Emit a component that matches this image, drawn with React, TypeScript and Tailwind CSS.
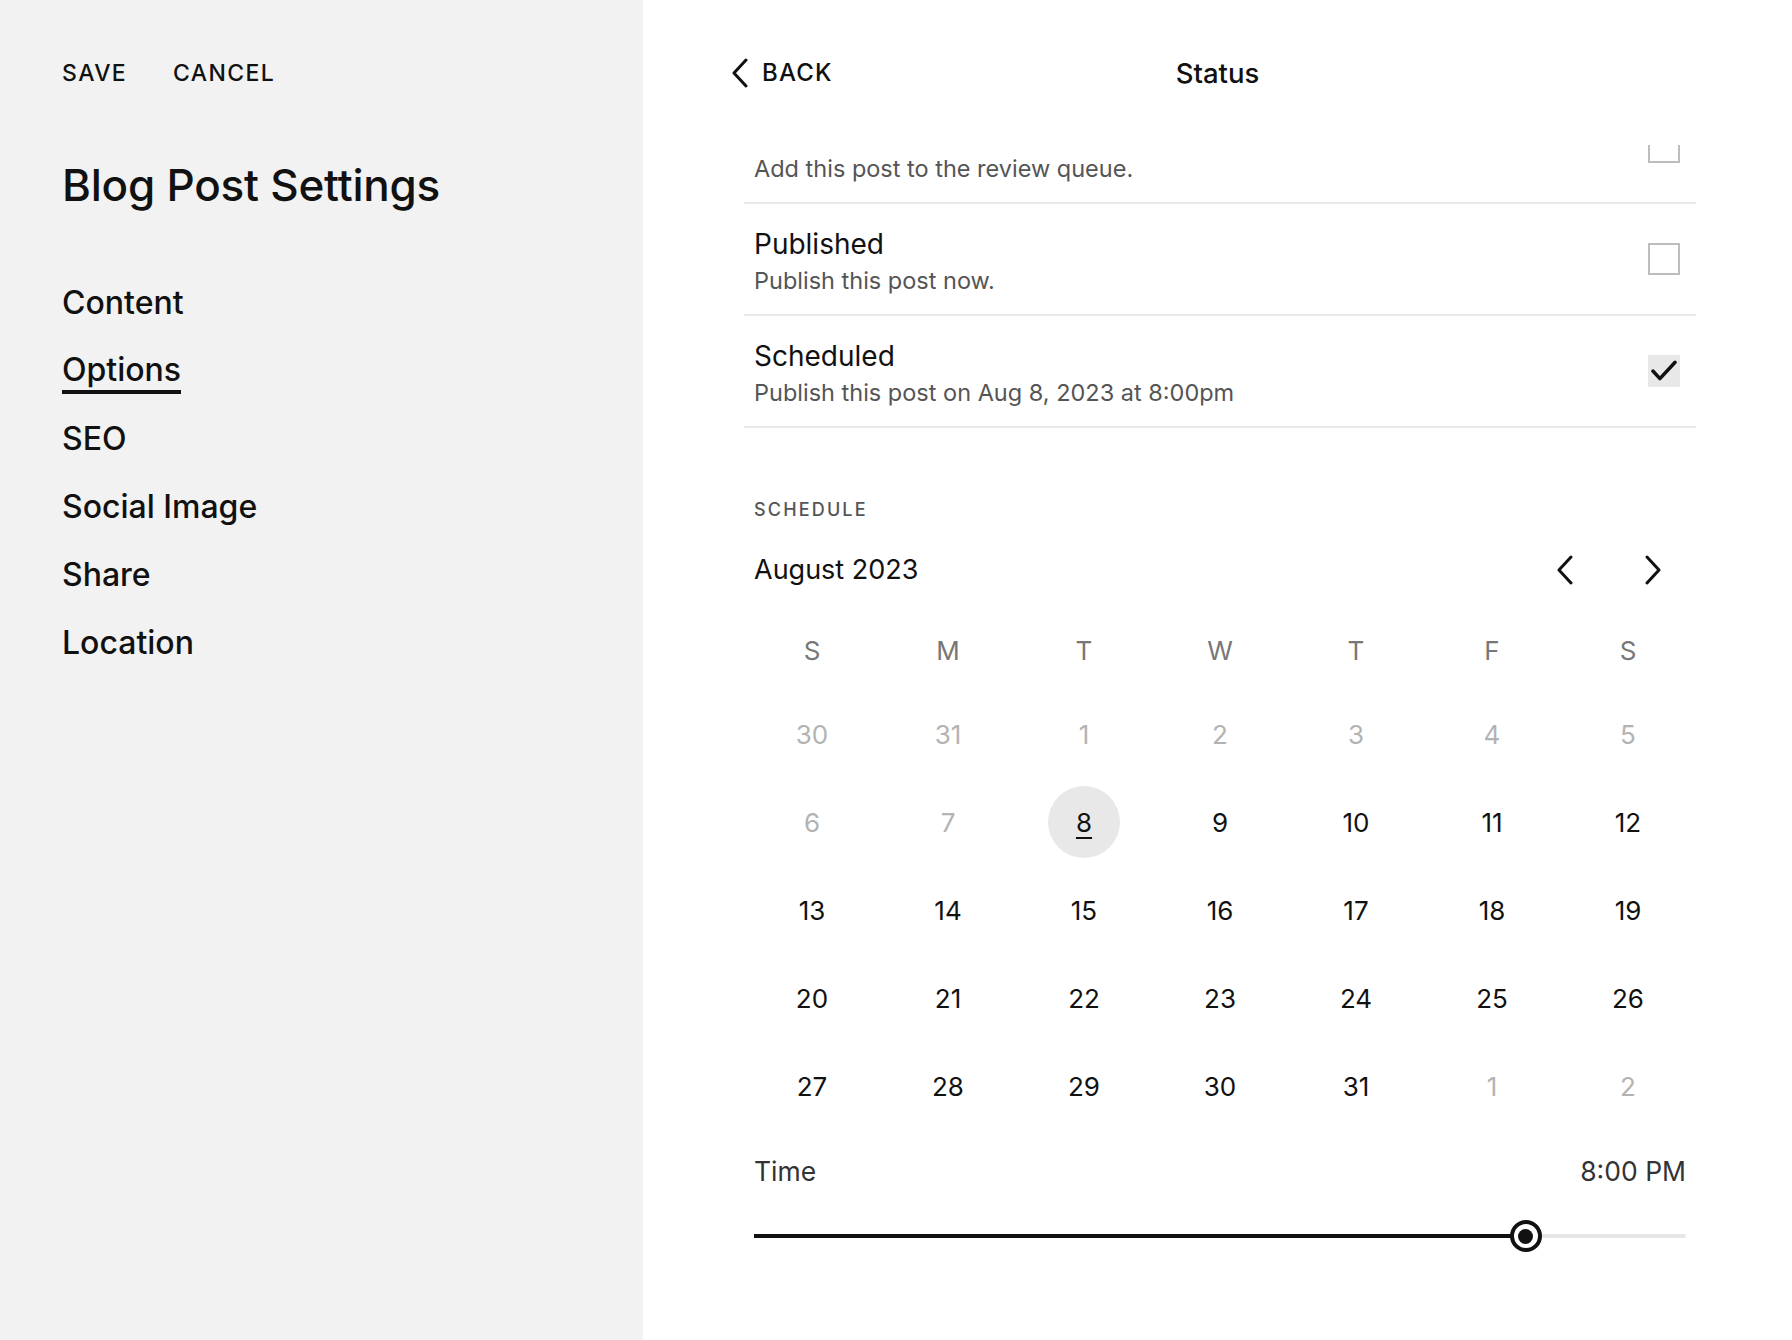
import React, { useState } from 'react';

type StatusRow = {
  title: string;
  subtitle: string;
  checked: boolean;
};

const rows: StatusRow[] = [
  { title: 'In Review', subtitle: 'Add this post to the review queue.', checked: false },
  { title: 'Published', subtitle: 'Publish this post now.', checked: false },
  { title: 'Scheduled', subtitle: 'Publish this post on Aug 8, 2023 at 8:00pm', checked: true },
];

const navItems = ['Content', 'Options', 'SEO', 'Social Image', 'Share', 'Location'];
const weekdays = ['S', 'M', 'T', 'W', 'T', 'F', 'S'];

// August 2023 as shown: leading days from July, trailing from September
const days: { day: number; muted: boolean }[] = [
  ...[30, 31].map((d) => ({ day: d, muted: true })),
  ...[1, 2, 3, 4, 5, 6, 7].map((d) => ({ day: d, muted: true })),
  ...Array.from({ length: 24 }, (_, i) => ({ day: i + 8, muted: false })),
  ...[1, 2].map((d) => ({ day: d, muted: true })),
];

function Chevron({ dir, className }: { dir: 'left' | 'right'; className?: string }) {
  return (
    <svg viewBox="0 0 18 30" className={className} fill="none" stroke="currentColor" strokeWidth="3" strokeLinecap="round" strokeLinejoin="round">
      {dir === 'left' ? <path d="M15 2 L3 15 L15 28" /> : <path d="M3 2 L15 15 L3 28" />}
    </svg>
  );
}

function Checkbox({ checked }: { checked: boolean }) {
  if (checked) {
    return (
      <div className="flex h-[32px] w-[32px] items-center justify-center bg-[#e8e8e8]">
        <svg viewBox="0 0 24 24" className="h-[28px] w-[28px]" fill="none" stroke="#111" strokeWidth="3" strokeLinecap="round" strokeLinejoin="round">
          <path d="M2.5 12 L8.5 18.5 L21.5 4.5" />
        </svg>
      </div>
    );
  }
  return <div className="h-[32px] w-[32px] border-2 border-[#bdbdbd]" />;
}

export default function App() {
  const [selected, setSelected] = useState(8);
  const timePct = 82.8;

  return (
    <div className="flex h-[1340px] w-full overflow-hidden bg-white font-['Inter','Noto_Sans',sans-serif] text-[#111]">
      <aside className="w-[643px] shrink-0 bg-[#f2f2f2] pl-[62px] pt-[58px]">
        <div className="flex gap-[46px] text-[23px] font-medium leading-[30px] tracking-[0.06em]">
          <button>SAVE</button>
          <button>CANCEL</button>
        </div>
        <h1 className="mt-[69px] text-[44px] font-medium leading-[56px] tracking-[-0.005em]">Blog Post Settings</h1>
        <nav className="mt-[69px] flex flex-col gap-[26px]">
          {navItems.map((item) => (
            <a key={item} className="flex h-[42px] items-start text-[32px] font-medium leading-[42px]">
              <span className={item === 'Options' ? 'border-b-[4px] border-[#111] leading-[40px]' : ''}>{item}</span>
            </a>
          ))}
        </nav>
      </aside>

      <main className="flex min-w-0 flex-1 flex-col">
        <header className="grid h-[145px] shrink-0 grid-cols-[1fr_auto_1fr] items-start pt-[54px]">
          <button className="flex items-center gap-[12px] pl-[87px] text-[24px] font-medium leading-[38px] tracking-[0.05em]">
            <Chevron dir="left" className="h-[30px] w-[20px]" />
            BACK
          </button>
          <h2 className="text-[27.5px] font-medium leading-[38px]">Status</h2>
          <div />
        </header>

        <div className="ml-[101px] mr-[96px] flex-1 overflow-hidden">
          <div className="-mt-[53px]">
            {rows.map((row) => (
              <div key={row.title} className="flex h-[112px] items-center justify-between border-b-2 border-[#e8e8e8] pl-[10px] pr-[16px]">
                <div className="pt-[6px]">
                  <div className="text-[28px] leading-[34px]">{row.title}</div>
                  <div className="mt-[4px] text-[23.5px] leading-[32px] text-[#555]">{row.subtitle}</div>
                </div>
                <Checkbox checked={row.checked} />
              </div>
            ))}
          </div>

          <section className="px-[10px]">
            <div className="mt-[70px] text-[18px] font-medium leading-[24px] tracking-[0.12em] text-[#555]">SCHEDULE</div>
            <div className="mt-[30px] flex h-[36px] items-center justify-between">
              <div className="text-[27px] leading-[36px]">August 2023</div>
              <div className="flex items-center gap-[66px] pr-[22px]">
                <Chevron dir="left" className="h-[30px] w-[22px]" />
                <Chevron dir="right" className="h-[30px] w-[22px]" />
              </div>
            </div>
          </section>

          <div className="mt-[22px] grid grid-cols-7">
            {weekdays.map((w, i) => (
              <div key={i} className="flex h-[80px] items-center justify-center text-[26px] text-[#777]">
                {w}
              </div>
            ))}
            {days.map((d, i) => {
              const isSel = !d.muted && d.day === selected;
              return (
                <div key={i} className="flex h-[88px] items-center justify-center">
                  <button
                    onClick={() => !d.muted && setSelected(d.day)}
                    className={
                      'flex h-[72px] w-[72px] items-center justify-center rounded-full text-[26px] ' +
                      (d.muted ? 'text-[#b3b3b3] ' : 'text-[#111] ') +
                      (isSel ? 'bg-[#e8e8e8] underline underline-offset-[5px] decoration-2' : '')
                    }
                  >
                    {d.day}
                  </button>
                </div>
              );
            })}
          </div>

          <section className="px-[10px]">
            <div className="mt-[23px] flex h-[36px] items-center justify-between text-[26.5px] leading-[36px]">
              <span className="text-[#333]">Time</span>
              <span className="text-[#333]">8:00 PM</span>
            </div>
            <div className="relative mt-[31px] h-[32px]">
              <div className="absolute left-0 right-0 top-[14px] h-[4px] rounded-full bg-[#e6e6e6]" />
              <div className="absolute left-0 top-[14px] h-[4px] bg-[#111]" style={{ width: `${timePct}%` }} />
              <div
                className="absolute top-0 flex h-[32px] w-[32px] -translate-x-1/2 items-center justify-center rounded-full border-[4px] border-[#111] bg-white"
                style={{ left: `${timePct}%` }}
              >
                <div className="h-[15px] w-[15px] rounded-full bg-[#111]" />
              </div>
            </div>
          </section>
        </div>
      </main>
    </div>
  );
}
